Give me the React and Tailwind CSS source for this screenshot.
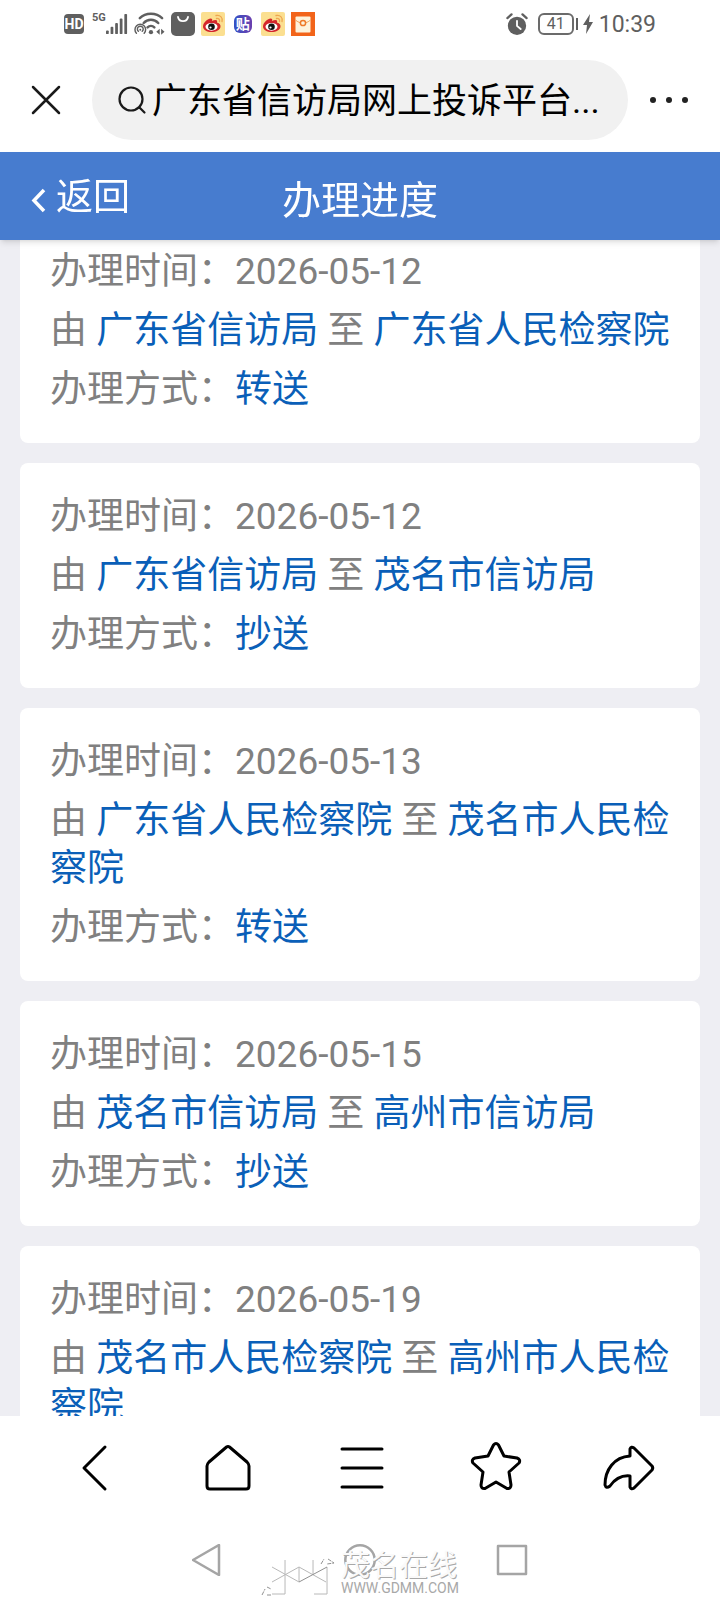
import { useState } from "react";

const records = [
    { date: "2026-05-12", from: "广东省信访局", to: "广东省人民检察院", way: "转送" },
    { date: "2026-05-12", from: "广东省信访局", to: "茂名市信访局", way: "抄送" },
    { date: "2026-05-13", from: "广东省人民检察院", to: "茂名市人民检察院", way: "转送" },
    { date: "2026-05-15", from: "茂名市信访局", to: "高州市信访局", way: "抄送" },
    { date: "2026-05-19", from: "茂名市人民检察院", to: "高州市人民检察院", way: "转送" },
];

const WeiboIcon = () => (
    <svg className="size-6" viewBox="0 0 24 24" fill="none">
        <rect width="24" height="24" rx="2" fill="#fbdf90" />
        <path d="M2 14.500c0-4 5-8 7.500-8 2 0 2 1 1.500 2.500 3-1.500 6-1.500 5 1.500 3 1 3.500 2 3.500 4 0 3.500-4.500 5.500-9 5.500s-8.500-2-8.500-5.500z" fill="#d3262b" />
        <ellipse cx="10.500" cy="14.800" rx="6" ry="3.900" fill="#fff" />
        <circle cx="10.500" cy="14.800" r="3.300" fill="#111" />
        <circle cx="9.500" cy="15.500" r="1.100" fill="#fff" />
        <path d="M15 3.500c4-1 7 2 6 6M15.500 6.500c2-.5 3.500 1 3 3" stroke="#efa650" strokeWidth="1.300" strokeLinecap="round" />
    </svg>
);

const StatusBar = () => (
    <div className="flex h-12 shrink-0 items-center justify-between px-16 text-[#5f5f5f]">
        <div className="flex items-center gap-[6px]">
            <span className="flex h-5 w-5 items-center justify-center rounded-sm bg-[#5f5f5f] text-sm font-bold text-white">HD</span>
            <div className="flex">
                <span className="-mt-[2px] ml-[2px] text-[11px] leading-4 font-bold">5G</span>
                <svg className="h-6 w-[22px]" viewBox="0 0 24 24" fill="currentColor">
                    <rect x="0" y="19" width="3" height="4" rx="1" />
                    <rect x="5" y="15" width="3" height="8" rx="1" />
                    <rect x="10" y="11" width="3" height="12" rx="1" />
                    <rect x="15" y="6" width="3" height="17" rx="1" />
                    <rect x="20" y="1" width="3" height="22" rx="1" />
                </svg>
            </div>
            <svg className="h-6 w-[31px]" viewBox="0 0 32 24" fill="none" stroke="currentColor" strokeLinecap="round">
                <path d="M6 6c6-6 17-6 23 0M10 11c4-4.500 11-4.500 15 0" strokeWidth="2.600" />
                <path d="M14 15.500c2-2 5-2 7 0" strokeWidth="2.600" />
                <circle cx="17.500" cy="20.500" r="2.200" fill="currentColor" stroke="none" />
                <path d="M2.500 21.500a5.500 5.500 0 1 1 8 0M4.500 19.500a3 3 0 1 1 4 0" strokeWidth="1.500" />
                <circle cx="6.500" cy="18" r="1" fill="currentColor" stroke="none" />
                <path d="M26.500 17v6l-3.500-3zM28 17v6l3.500-3z" fill="currentColor" stroke="none" />
            </svg>
            <svg className="size-6" viewBox="0 0 24 24" fill="none">
                <rect width="24" height="24" rx="5" fill="#5f5f5f" />
                <path d="M7 5c1 5.500 9 5.500 10 0" stroke="#fff" strokeWidth="1.800" strokeLinecap="round" />
            </svg>
            <WeiboIcon />
            <span className="flex h-6 w-6 items-center justify-center">
                <span className="flex h-[18px] w-[18px] items-center justify-center rounded-md bg-linear-to-r from-[#2f50c4] to-[#6a3fae] text-sm font-bold text-white">贴</span>
            </span>
            <WeiboIcon />
            <svg className="size-6" viewBox="0 0 24 24" fill="none">
                <rect width="24" height="24" fill="#f2641a" />
                <rect x="4.500" y="4.500" width="15" height="16" rx="1" fill="#fdf3dc" />
                <path d="M4.500 8c4 4 11 4 15 0" stroke="#f2a35a" />
                <circle cx="12" cy="11" r="2.600" fill="#fdf3dc" stroke="#ee7a28" strokeWidth="1.500" />
            </svg>
        </div>
        <div className="flex items-center">
            <svg className="h-6 w-[22px]" viewBox="0 0 24 24" fill="currentColor">
                <circle cx="12" cy="14" r="10" />
                <path d="M1.500 5.500l4.500-4M22.500 5.500l-4.500-4" stroke="currentColor" strokeWidth="2.500" strokeLinecap="round" />
                <path d="M12 8.500V14l4 3.500" fill="none" stroke="#fff" strokeWidth="2" strokeLinecap="round" />
            </svg>
            <span className="ml-[10px] flex h-[22px] w-9 items-center justify-center rounded-md border-2 border-[#6b6b6b] text-base">41</span>
            <span className="ml-[2px] h-3 w-[2px] bg-[#5f5f5f]"></span>
            <svg className="ml-[5px] h-5 w-[10px]" viewBox="0 0 10 20" fill="currentColor">
                <path d="M7 0L0 11h4L3 20l7-12H6z" />
            </svg>
            <span className="mt-[2px] ml-[6px] text-[23px]">10:39</span>
        </div>
    </div>
);

const RecordCard = ({ record }) => (
    <li className="space-y-[11px] rounded-lg bg-white px-[30px] pt-[30px] pb-[29px]">
        <p>办理时间：{record.date}</p>
        <p>
            由 <span className="text-[#0a5fb8]">{record.from}</span> 至 <span className="text-[#0a5fb8]">{record.to}</span>
        </p>
        <p>办理方式：<span className="text-[#0a5fb8]">{record.way}</span></p>
    </li>
);

const Watermark = () => (
    <div className="pointer-events-none absolute bottom-1 left-1/2 flex -translate-x-1/2 items-end text-[#a8a8a8]">
        <svg className="h-10 w-20" viewBox="0 0 80 40" fill="none" stroke="#b8b8b8">
            <path d="M24 4v34H11M11 11l27 15V11L11 26M38 11l27 15M52 4v15M66 11v27H53" />
            <path d="M38 26l28-15" stroke="#909090" />
            <path d="M1 39l3-6M6 31l4 2M6 39h4M60 8l3-5M67 3l6 4-7 1" stroke="#909090" strokeDasharray="4 1" />
        </svg>
        <div className="whitespace-nowrap">
            <p className="text-[29px] leading-7 text-[#fafafa] [text-shadow:1px_1px_0_#a8a8a8]">茂名在线</p>
            <p className="text-sm leading-4">WWW.GDMM.COM</p>
        </div>
    </div>
);

const App = () => {
    const [starred, setStarred] = useState(false);

    return (
        <div className="flex h-screen flex-col overflow-hidden bg-white font-[Roboto,'Noto_Sans_CJK_SC',sans-serif]">
            <StatusBar />

            <div className="flex h-[104px] shrink-0 items-center px-7">
                <button type="button" aria-label="关闭" className="mr-7">
                    <svg className="size-9" viewBox="0 0 36 36" fill="none" stroke="#1a1a1a" strokeWidth="2.500" strokeLinecap="round">
                        <path d="M5 5l26 26M31 5L5 31" />
                    </svg>
                </button>
                <button type="button" className="flex h-20 min-w-0 flex-1 items-center rounded-full bg-[#f1f1f1] pr-6 pl-6 text-[35px] text-black">
                    <svg className="size-8 shrink-0" viewBox="0 0 32 32" fill="none" stroke="#1a1a1a" strokeWidth="2.200" strokeLinecap="round">
                        <circle cx="15" cy="15" r="11.500" />
                        <path d="M23.500 23.500l5 5" />
                    </svg>
                    <span className="ml-1 truncate pt-1">广东省信访局网上投诉平台...</span>
                </button>
                <button type="button" aria-label="更多" className="ml-5">
                    <svg className="h-9 w-11" viewBox="0 0 44 36" fill="#222">
                        <circle cx="5" cy="18" r="3" />
                        <circle cx="21" cy="18" r="3" />
                        <circle cx="37" cy="18" r="3" />
                    </svg>
                </button>
            </div>

            <header className="z-10 grid h-[88px] shrink-0 grid-cols-3 items-center bg-[#477ccf] px-7 text-white shadow-md">
                <a href="#back" className="flex items-center pt-1 text-[37px]">
                    <svg className="mt-1 mr-2 h-7 w-5" viewBox="0 0 20 28" fill="none" stroke="currentColor" strokeWidth="3.500">
                        <path d="M16 4L6 14.500 16 25" />
                    </svg>
                    返回
                </a>
                <h1 className="pt-[10px] text-center text-[39px]">办理进度</h1>
            </header>

            <main className="min-h-0 flex-1 overflow-y-auto bg-[#eeeef3] px-5 [scrollbar-width:none]">
                <ul className="-mt-[22px] space-y-5 text-[37px] leading-[48px] text-[#808080]">
                    {records.map((record, i) => (
                        <RecordCard key={i} record={record} />
                    ))}
                </ul>
            </main>

            <nav className="grid h-[104px] shrink-0 grid-cols-5 place-items-center pr-6 pl-7">
                <button type="button" aria-label="后退">
                    <svg className="size-14" viewBox="0 0 56 56" fill="none" stroke="#000" strokeWidth="3" strokeLinecap="round" strokeLinejoin="round">
                        <path d="M38 7L17 28l21 21" />
                    </svg>
                </button>
                <button type="button" aria-label="主页">
                    <svg className="size-14" viewBox="0 0 56 56" fill="none" stroke="#000" strokeWidth="3" strokeLinejoin="round">
                        <path d="M26.500 7q1.500-1 3 0L47 22q2 2 2 4v20q0 3-3 3H10q-3 0-3-3V26q0-2 2-4z" />
                    </svg>
                </button>
                <button type="button" aria-label="菜单">
                    <svg className="size-14" viewBox="0 0 56 56" fill="none" stroke="#000" strokeWidth="3" strokeLinecap="round">
                        <path d="M8 9h40M8 28h40M8 47h40" />
                    </svg>
                </button>
                <button type="button" aria-label="收藏" aria-pressed={starred} onClick={() => setStarred(!starred)}>
                    <svg className="size-14" viewBox="0 0 56 56" fill={starred ? "#000" : "none"} stroke="#000" strokeWidth="3" strokeLinejoin="round">
                        <path d="M25.500 5q2.500-3 5 0l5.500 11 13 2q4 1.500 2 5l-10 9 2 13q0 4-4 3.500L28 42l-11 6.500q-4 .5-4-3.500l2-13-10-9q-2-3.500 2-5l13-2z" />
                    </svg>
                </button>
                <button type="button" aria-label="分享">
                    <svg className="size-14" viewBox="0 0 56 56" fill="none" stroke="#000" strokeWidth="3" strokeLinejoin="round">
                        <path d="M29 16V9q1-3 4-1l18 18q1.500 2 0 4L33 48q-3 2-4-1V36c-9-1-15 3-20 10q-4 3-5-1C4 30 13 17 29 16z" />
                    </svg>
                </button>
            </nav>

            <div className="relative flex h-20 shrink-0 items-start justify-center gap-[120px] pt-6 text-[#a5a5a5]">
                <button type="button" aria-label="返回">
                    <svg className="size-8" viewBox="0 0 32 32" fill="none" stroke="currentColor" strokeWidth="2.500" strokeLinejoin="round">
                        <path d="M27 1v30L1 16z" />
                    </svg>
                </button>
                <button type="button" aria-label="桌面">
                    <svg className="size-8" viewBox="0 0 32 32" fill="none" stroke="currentColor" strokeWidth="2.500">
                        <circle cx="16" cy="16" r="14.700" />
                    </svg>
                </button>
                <button type="button" aria-label="最近任务">
                    <svg className="size-8" viewBox="0 0 32 32" fill="none" stroke="currentColor" strokeWidth="2.500" strokeLinejoin="round">
                        <rect x="2" y="2" width="28" height="28" />
                    </svg>
                </button>
                <Watermark />
            </div>
        </div>
    );
};

export default App;
